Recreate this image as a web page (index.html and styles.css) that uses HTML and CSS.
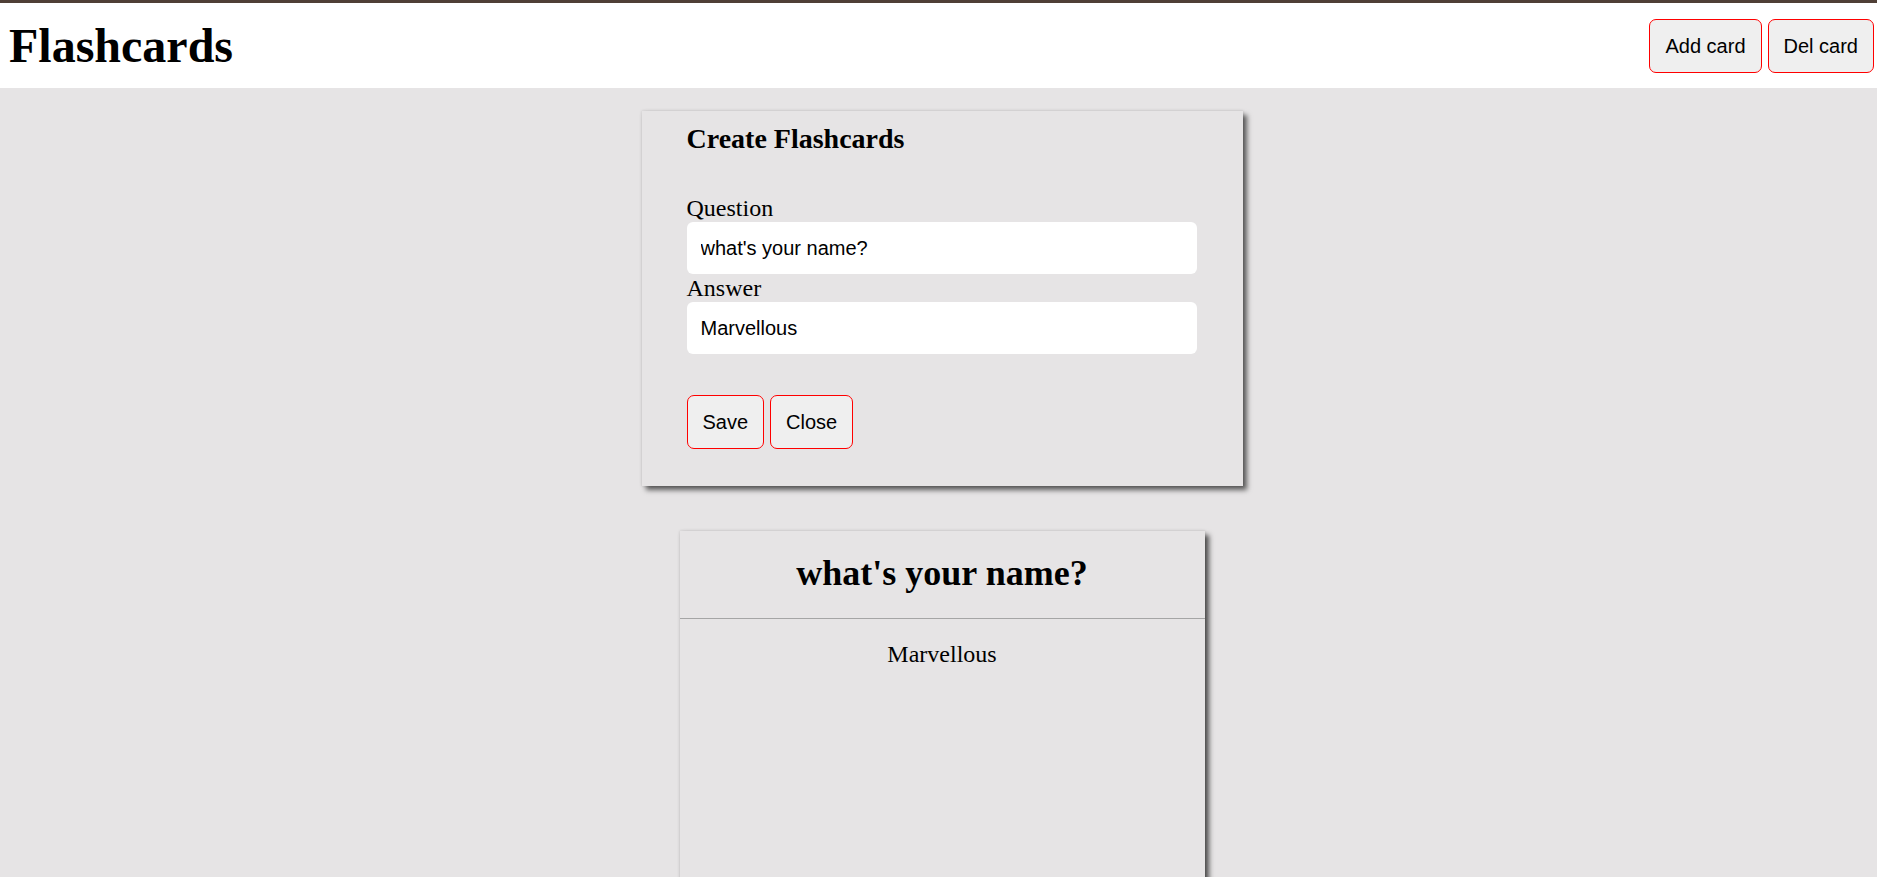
FILE: index.html
```html
<!DOCTYPE html>
<html lang="en">
<head>
<meta charset="utf-8">
<title>Flashcards</title>
<link rel="stylesheet" href="styles.css">
</head>
<body>
<header class="topbar">
  <h1 class="brand">Flashcards</h1>
  <div class="top-actions">
    <button class="btn btn-top">Add card</button>
    <button class="btn btn-top">Del card</button>
  </div>
</header>
<main class="main">
  <section class="create">
    <h2 class="create-title">Create Flashcards</h2>
    <label class="field-label" for="q">Question</label>
    <input class="field" id="q" type="text" value="what's your name?">
    <label class="field-label" for="a">Answer</label>
    <input class="field" id="a" type="text" value="Marvellous">
    <div class="form-actions">
      <button class="btn btn-form">Save</button>
      <button class="btn btn-form">Close</button>
    </div>
  </section>
  <article class="card">
    <div class="card-front">
      <h2 class="card-question">what's your name?</h2>
    </div>
    <div class="card-back">
      <p class="card-answer">Marvellous</p>
    </div>
  </article>
</main>
<script src="app.js"></script>
</body>
</html>
```
FILE: styles.css
```css
html, body {
  margin: 0;
  padding: 0;
}
body {
  background: #e6e4e5;
  font-family: "Liberation Serif", "Times New Roman", serif;
  color: #000;
  overflow: hidden;
  height: 877px;
}
.topbar {
  display: flex;
  align-items: center;
  justify-content: space-between;
  background: #fff;
  border-top: 3px solid #4f3f36;
  min-height: 85px;
  padding: 0 3px 0 9px;
}
.brand {
  margin: 0;
  font-size: 48px;
  line-height: 55px;
  font-weight: bold;
}
.top-actions {
  display: flex;
  gap: 6px;
}
.btn {
  font-family: "Liberation Sans", Arial, sans-serif;
  font-size: 20px;
  line-height: 24px;
  height: 54px;
  background: #efefef;
  color: #000;
  border: 1px solid #ff0000;
  border-radius: 7px;
  margin: 0;
  cursor: pointer;
}
.btn-top {
  padding: 0 15px;
}
.btn-form {
  padding: 0 15px;
}
.main {
  display: flex;
  flex-direction: column;
  align-items: center;
  padding-left: 7px;
}
.create {
  width: 510px;
  margin-top: 23px;
  padding: 12px 46px 37px 45px;
  background: #e6e4e5;
  box-shadow: 4px 4px 5px rgba(0, 0, 0, 0.6), 0 0 3px rgba(0, 0, 0, 0.15);
  display: flex;
  flex-direction: column;
}
.create-title {
  margin: 0 0 39px;
  font-size: 28px;
  line-height: 32px;
  font-weight: bold;
}
.field-label {
  font-size: 24px;
  line-height: 28px;
}
.field {
  box-sizing: border-box;
  width: 510px;
  height: 52px;
  border: none;
  border-radius: 6px;
  background: #fff;
  padding: 0 14px;
  font-family: "Liberation Sans", Arial, sans-serif;
  font-size: 20px;
  color: #000;
  caret-color: #000;
  outline: none;
  margin: 0;
}
.form-actions {
  display: flex;
  gap: 6px;
  margin-top: 41px;
}
.card {
  width: 525px;
  min-height: 420px;
  margin-top: 45px;
  background: #e6e4e5;
  box-shadow: 4px 4px 5px rgba(0, 0, 0, 0.65), 0 0 3px rgba(0, 0, 0, 0.15);
}
.card-front {
  padding: 22px 0 24px;
  border-bottom: 1px solid #a5a5a5;
  text-align: center;
}
.card-question {
  margin: 0;
  font-size: 36px;
  line-height: 41px;
  font-weight: bold;
}
.card-back {
  padding-top: 21px;
  text-align: center;
}
.card-answer {
  margin: 0;
  font-size: 24px;
  line-height: 28px;
}
```
FILE: app.js
```js
var answer = document.getElementById('a');
answer.focus();
answer.setSelectionRange(answer.value.length, answer.value.length);
```
